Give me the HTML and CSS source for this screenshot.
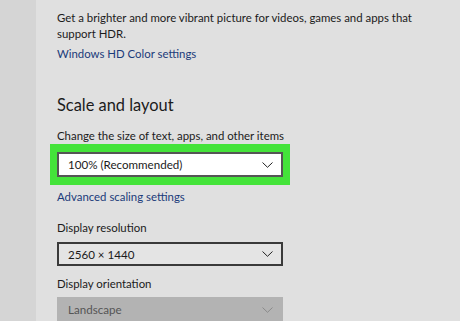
FILE: index.html
```html
<!DOCTYPE html>
<html lang="en">
<head>
  <meta charset="UTF-8" />
  <meta name="viewport" content="width=device-width, initial-scale=1.0"/>
  <title>Display settings</title>
  <link rel="stylesheet" href="styles.css">
</head>
<body>
  <div class="page">
    <div class="sidebar"></div>
    <main class="content">
      <p class="desc">Get a brighter and more vibrant picture for videos, games and apps that support HDR.</p>
      <a class="link link-hdr" href="#">Windows HD Color settings</a>

      <h2>Scale and layout</h2>

      <div class="label label-scale">Change the size of text, apps, and other items</div>
      <div class="highlight">
        <div class="dropdown">
          <span>100% (Recommended)</span>
          <svg class="chev" width="11" height="6" viewBox="0 0 11 6"><path d="M0.5 0.5 L5.5 5.3 L10.5 0.5" fill="none" stroke="#222" stroke-width="1"/></svg>
        </div>
      </div>
      <a class="link link-adv" href="#">Advanced scaling settings</a>

      <div class="label label-res">Display resolution</div>
      <div class="dropdown dropdown-res">
        <span>2560 × 1440</span>
        <svg class="chev" width="11" height="6" viewBox="0 0 11 6"><path d="M0.5 0.5 L5.5 5.3 L10.5 0.5" fill="none" stroke="#222" stroke-width="1"/></svg>
      </div>

      <div class="label label-orient">Display orientation</div>
      <div class="dropdown dropdown-off">
        <span>Landscape</span>
        <svg class="chev" width="11" height="6" viewBox="0 0 11 6"><path d="M0.5 0.5 L5.5 5.3 L10.5 0.5" fill="none" stroke="#8a8a8a" stroke-width="1"/></svg>
      </div>
    </main>
  </div>
</body>
</html>
```

FILE: styles.css
```css
html, body {
  margin: 0;
  padding: 0;
  height: 100%;
  overflow: hidden;
}

body {
  font-family: Lato, 'Open Sans', sans-serif;
  background-color: #e0e0e0;
  color: #1b1b1b;
  font-size: 11.4px;
}

.page {
  display: flex;
  height: 100%;
}

.sidebar {
  width: 36px;
  flex-shrink: 0;
  background-color: #d5d5d5;
}

.content {
  padding-left: 21px;
  padding-top: 10px;
  width: 380px;
}

.desc {
  margin: 0;
  line-height: 16px;
  width: 380px;
}

.link {
  display: block;
  color: #1b3b7a;
  text-decoration: none;
}

.link-hdr {
  margin-top: 4px;
  line-height: 16px;
}

h2 {
  font-weight: normal;
  font-size: 16.4px;
  margin: 32px 0 0 0;
  line-height: 22px;
  color: #1b1b1b;
}

.label {
  line-height: 16px;
}

.label-scale {
  margin-top: 12px;
}

.highlight {
  background-color: #44e33a;
  width: 226px;
  padding: 8px 7px 8px 7px;
  margin: 0 0 0 -7px;
}

.dropdown {
  box-sizing: border-box;
  height: 25px;
  width: 226px;
  border: 2px solid #3a3a3a;
  background-color: #ffffff;
  display: flex;
  align-items: center;
  justify-content: space-between;
  padding: 0 8px 0 9px;
  font-size: 11.6px;
}

.highlight .dropdown {
  border-color: #555;
}

.chev {
  display: block;
}

.link-adv {
  margin-top: 4px;
  line-height: 16px;
}

.label-res {
  margin-top: 15px;
}

.dropdown-res {
  height: 24px;
  margin-top: 6px;
  background-color: #e4e4e4;
}

.label-orient {
  margin-top: 10px;
}

.dropdown-off {
  margin-top: 5px;
  border-color: #b3b3b3;
  background-color: #b3b3b3;
  color: #555;
}
```
